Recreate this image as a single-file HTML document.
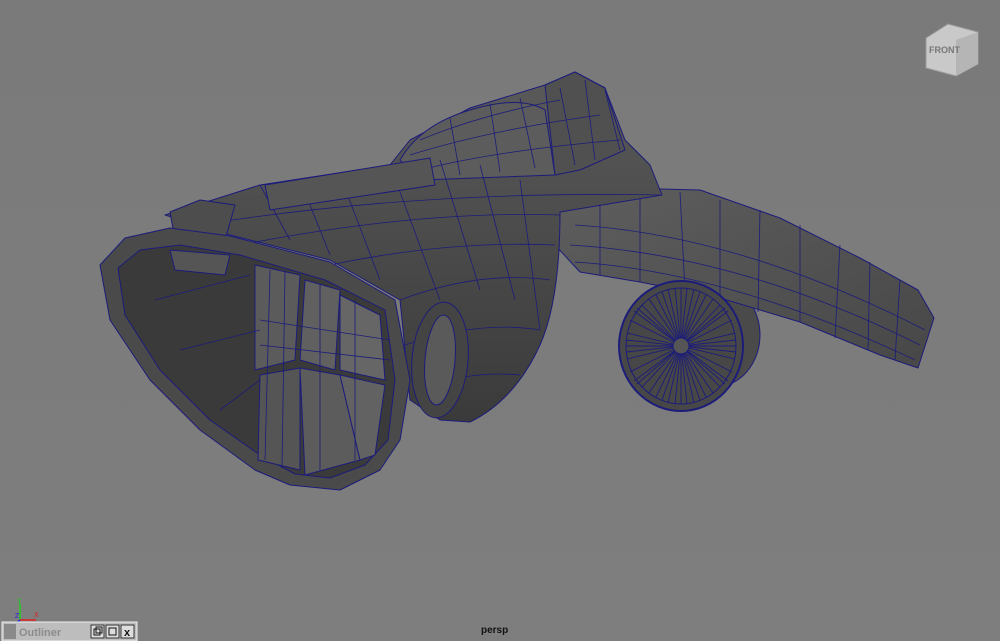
<!DOCTYPE html>
<html><head><style>
html,body{margin:0;padding:0;width:1000px;height:641px;overflow:hidden;background:#7b7b7b;font-family:"Liberation Sans",sans-serif}
svg{position:absolute;left:0;top:0}
</style></head><body>
<svg width="1000" height="641" viewBox="0 0 1000 641">
<defs>
<linearGradient id="bg" x1="0" y1="0" x2="0" y2="1"><stop offset="0" stop-color="#7a7a7a"/><stop offset="1" stop-color="#7e7e7e"/></linearGradient>
<linearGradient id="body" x1="0" y1="0" x2="0" y2="1"><stop offset="0" stop-color="#5a5a5a"/><stop offset="1" stop-color="#3a3a3a"/></linearGradient>
<linearGradient id="wing" x1="0" y1="0" x2="1" y2="1"><stop offset="0" stop-color="#5e5e5e"/><stop offset="1" stop-color="#474747"/></linearGradient>
</defs>
<rect width="1000" height="641" fill="url(#bg)"/>
<g stroke="#1c1c7a" stroke-width="1" stroke-linejoin="round">
<ellipse cx="715" cy="335" rx="45" ry="52" fill="#4a4a4a"/>
<path d="M560,210 L620,188 L700,190 L780,218 L860,258 L918,290 L934,318 L918,368 L880,355 L800,322 L720,298 L640,282 L580,272 L555,245 Z" fill="url(#wing)"/>
<g fill="none" stroke-width="0.8">
<path d="M575,225 Q740,235 925,330"/><path d="M570,245 Q740,255 920,345"/><path d="M575,262 Q730,272 915,360"/>
<path d="M600,195 L600,275"/><path d="M640,190 L640,282"/><path d="M680,192 L685,292"/><path d="M720,200 L720,298"/><path d="M760,210 L758,312"/><path d="M800,225 L800,322"/><path d="M840,245 L835,338"/><path d="M870,262 L868,350"/><path d="M900,280 L895,360"/>
</g>
<path d="M165,215 L260,185 L390,165 L410,140 L470,108 L545,85 L575,72 L605,88 L625,140 L650,165 L662,195 L560,212 Q560,300 540,345 Q515,400 470,422 L440,420 L410,400 L400,300 L330,260 L230,235 Z" fill="url(#body)"/>
<path d="M400,160 Q420,125 470,110 Q520,95 545,110 L555,175 L420,180 Z" fill="#5c5c5c"/>
<path d="M545,85 L575,72 L605,88 L625,150 L580,170 L555,175 Z" fill="#505050"/>
<g fill="none" stroke-width="0.8">
<path d="M420,140 Q480,115 560,100"/><path d="M410,155 Q490,130 600,115"/><path d="M420,170 Q500,150 620,140"/>
<path d="M450,118 L460,175"/><path d="M490,104 L500,172"/><path d="M520,98 L535,168"/><path d="M560,88 L575,165"/><path d="M585,80 L595,160"/><path d="M605,90 L620,150"/>
<path d="M170,230 Q400,190 660,195"/><path d="M240,245 Q420,210 560,215"/><path d="M330,265 Q450,240 555,245"/><path d="M400,300 Q480,270 550,280"/><path d="M405,345 Q480,320 540,330"/><path d="M415,390 Q470,370 520,375"/>
<path d="M260,185 L290,240"/><path d="M300,180 L330,255"/><path d="M340,175 L380,280"/><path d="M390,165 L440,300"/><path d="M440,160 L480,290"/><path d="M480,165 L515,300"/><path d="M520,180 L540,330"/>
</g>
<ellipse cx="440" cy="360" rx="28" ry="58" fill="#444" transform="rotate(5 440 360)"/>
<ellipse cx="440" cy="360" rx="15" ry="45" fill="#5a5a5a" transform="rotate(5 440 360)"/>
<path d="M170,212 L200,200 L235,205 L225,240 L175,240 Z" fill="#4d4d4d"/>
<path d="M265,185 L430,158 L435,185 L270,210 Z" fill="#555"/>
<path d="M100,265 L125,238 L170,228 L230,236 L330,262 L395,300 L410,380 L400,440 L380,470 L340,490 L290,485 L255,470 L200,430 L150,380 L110,320 Z" fill="#4a4a4a"/>
<path d="M118,268 L140,250 L180,245 L240,255 L325,280 L385,310 L395,380 L388,440 L365,465 L330,478 L295,474 L260,455 L210,420 L160,370 L125,315 Z" fill="#3a3a3a"/>
<path d="M170,250 L230,255 L225,275 L175,270 Z" fill="#555"/>
<path d="M255,265 L300,275 L295,360 L255,370 Z" fill="#5b5b5b"/>
<path d="M305,280 L340,290 L335,370 L300,360 Z" fill="#606060"/>
<path d="M340,295 L380,315 L385,380 L340,370 Z" fill="#666"/>
<path d="M260,375 L300,368 L300,470 L258,460 Z" fill="#555"/>
<path d="M300,368 L340,375 L360,460 L305,475 Z" fill="#5c5c5c"/>
<path d="M340,375 L385,385 L375,455 L360,460 Z" fill="#626262"/>
<g fill="none" stroke-width="0.8">
<path d="M155,300 L250,275"/><path d="M180,350 L260,330"/><path d="M220,410 L260,380"/><path d="M270,270 L265,460"/><path d="M285,272 L282,468"/><path d="M320,285 L320,470"/><path d="M355,300 L355,460"/><path d="M260,320 L390,340"/><path d="M260,345 L390,360"/>
</g>
<ellipse cx="681" cy="346" rx="62" ry="65" fill="#474747" stroke-width="2"/>
<ellipse cx="681" cy="346" rx="55" ry="58" fill="none"/>
<g stroke-width="0.9">
<path d="M626,346 L736,346 M681,288 L681,404 M642,305 L720,387 M720,305 L642,387 M630,320 L732,372 M630,372 L732,320 M656,295 L706,397 M706,295 L656,397 M627,333 L735,359 M627,359 L735,333 M668,289 L694,403 M694,289 L668,403 M634,311 L728,381 M634,381 L728,311 M649,299 L713,393 M713,299 L649,393 M626,340 L736,352 M626,352 L736,340 M675,288 L687,404 M687,288 L675,404 M637,308 L725,384 M637,384 L725,308 M662,292 L700,400 M700,292 L662,400"/>
</g>
<circle cx="681" cy="346" r="8" fill="#555"/>
</g>
<path d="M926,38 L948,24 L978,32 L978,64 L956,76 L926,68 Z" fill="#c9c9c9" stroke="#999"/>
<path d="M956,40 L978,32 L978,64 L956,76 Z" fill="#b5b5b5"/>
<text x="929" y="53" font-size="9" font-weight="bold" fill="#777">FRONT</text>
<g stroke-width="1.5"><line x1="20" y1="620" x2="20" y2="603" stroke="#2c2"/><line x1="20" y1="620" x2="36" y2="620" stroke="#d22"/><line x1="20" y1="620" x2="14" y2="625" stroke="#22d"/></g>
<text x="17" y="603" font-size="7" fill="#2c2">Y</text><text x="34" y="617" font-size="7" fill="#d22">X</text><text x="15" y="618" font-size="7" fill="#22d">Z</text>
<rect x="2" y="622" width="135" height="19" fill="#bdbdbd" stroke="#eee"/>
<rect x="4" y="624" width="12" height="15" fill="#8a8a8a"/>
<text x="19" y="636" font-size="11" font-weight="bold" fill="#8c8c8c">Outliner</text>
<rect x="91" y="625" width="13" height="13" fill="#ddd" stroke="#333"/>
<rect x="106" y="625" width="13" height="13" fill="#ddd" stroke="#333"/>
<rect x="121" y="625" width="13" height="13" fill="#ddd" stroke="#333"/>
<text x="124" y="636" font-size="11" font-weight="bold" fill="#111">x</text>
<rect x="109" y="628" width="7" height="7" fill="none" stroke="#111"/>
<rect x="94" y="629" width="6" height="6" fill="none" stroke="#111"/><rect x="96" y="627" width="6" height="6" fill="none" stroke="#111"/>
<text x="481" y="633" font-size="10" font-weight="bold" fill="#111">persp</text>
</svg>
</body></html>
